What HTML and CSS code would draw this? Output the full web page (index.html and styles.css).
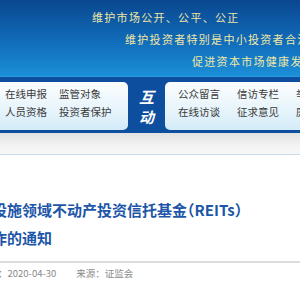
FILE: index.html
```html
<!DOCTYPE html>
<html lang="zh-CN">
<head>
<meta charset="utf-8">
<link rel="stylesheet" href="styles.css">
</head>
<body>
<div class="page">
  <header class="banner">
    <p class="slogan s1">维护市场公开、公平、公正</p>
    <p class="slogan s2">维护投资者特别是中小投资者合法权益</p>
    <p class="slogan s3">促进资本市场健康发展</p>
  </header>
  <nav class="nav">
    <div class="box box-left">
      <div class="links">
        <span>在线申报</span><span>监管对象</span>
        <span>人员资格</span><span>投资者保护</span>
      </div>
    </div>
    <div class="hudong"><span>互</span><span>动</span></div>
    <div class="box box-right">
      <div class="links links-right">
        <span>公众留言</span><span>信访专栏</span><span>举报中心</span>
        <span>在线访谈</span><span>征求意见</span><span>廉政监督</span>
      </div>
    </div>
  </nav>
  <div class="band"></div>
  <main class="article">
    <h1 class="title">设施领域不动产投资信托基金<span class="paren">（</span>REITs<span class="paren">）</span><br>作的通知</h1>
    <div class="rule"></div>
    <div class="meta"><span>：2020-04-30</span><span>来源：证监会</span></div>
  </main>
</div>
</body>
</html>
```

FILE: styles.css
```css
html, body {
  margin: 0;
  padding: 0;
  background: #ffffff;
}
.page {
  width: 300px;
  height: 300px;
  overflow: hidden;
  font-family: "Noto Sans CJK SC", "Noto Sans", sans-serif;
}
.banner {
  height: 77px;
  box-sizing: border-box;
  padding-top: 10px;
  background: linear-gradient(180deg, #0a4790 0%, #116cba 55%, #1c8fd7 100%);
  border-bottom: 1px solid #2a98e0;
}
.slogan {
  margin: 0;
  height: 22px;
  line-height: 15px;
  font-size: 11px;
  letter-spacing: 1.3px;
  color: #efe7a4;
  white-space: nowrap;
}
.s1 { padding-left: 92px; }
.s2 { padding-left: 125px; }
.s3 { padding-left: 192px; }

.nav {
  display: flex;
  align-items: stretch;
  background: #0d4e9f;
  padding: 5px 0 3px;
  height: 48px;
}
.box {
  border-radius: 5px;
  background: linear-gradient(180deg, #fbfdfe 0%, #e6f4fb 60%, #d3ebf8 100%);
  box-sizing: border-box;
  padding-top: 3px;
}
.box-left {
  width: 138px;
  margin-left: -10px;
  padding-left: 15px;
  flex: none;
}
.box-right {
  flex: none;
  width: 160px;
  padding-left: 13px;
}
.links {
  display: grid;
  grid-template-columns: 42px 42px;
  column-gap: 12px;
  font-size: 10.5px;
  line-height: 18px;
  color: #3a3a3a;
  white-space: nowrap;
}
.links-right {
  grid-template-columns: 42px 42px 42px;
  column-gap: 17px;
}
.hudong {
  width: 37px;
  flex: none;
  display: flex;
  flex-direction: column;
  align-items: center;
  justify-content: center;
  gap: 3px;
  color: #ffffff;
  font-weight: 700;
  font-size: 15px;
  line-height: 17px;
  font-style: italic;
}
.band {
  height: 21px;
  background: linear-gradient(180deg, #e2e2e2 0%, #f3f3f3 60%, #f7f7f7 100%);
  border-bottom: 1px solid #c9dbea;
}
.article {
  padding-top: 41px;
}
.title {
  margin: 0 0 9px -8px;
  font-size: 15px;
  line-height: 28px;
  font-weight: 700;
  color: #1d56a8;
  white-space: nowrap;
}
.paren {
  font-feature-settings: "halt";
}
.rule {
  height: 2px;
  background: #dcdcdc;
}
.meta {
  display: flex;
  gap: 20px;
  margin-left: -2px;
  padding-top: 4px;
  font-size: 9.5px;
  line-height: 13px;
  color: #8a8a8a;
}
```
